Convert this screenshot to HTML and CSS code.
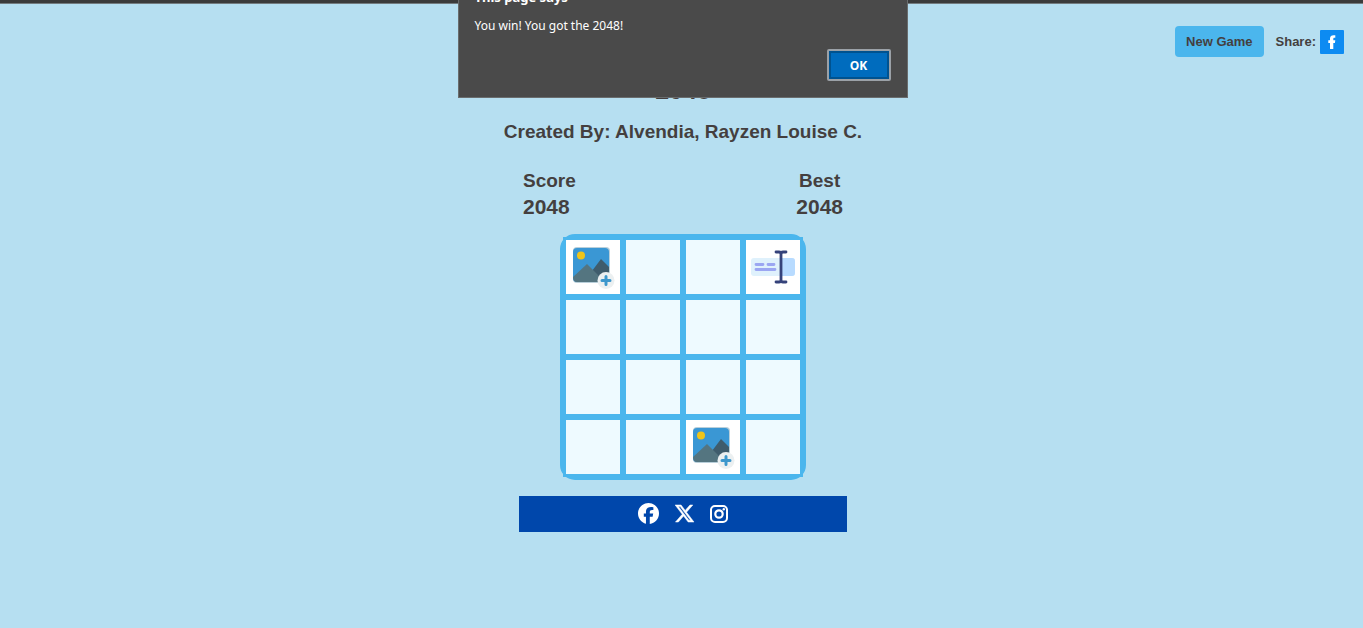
FILE: index.html
```html
<!DOCTYPE html>
<html lang="en">
<head>
<meta charset="utf-8">
<title>2048</title>
<link rel="stylesheet" href="styles.css">
</head>
<body>
<svg class="defs" aria-hidden="true">
  <symbol id="picture" viewBox="0 0 54 54">
    <rect x="7" y="7" width="37" height="36" rx="4" fill="#b9cfda"/>
    <rect x="7" y="8" width="36" height="34" rx="4" fill="#3a97d4"/>
    <circle cx="15" cy="15.500" r="4" fill="#f0c419"/>
    <path d="M26 31 35 19 43 27V38Q43 42 39 42H30Z" fill="#3f5c6c"/>
    <path d="M7 37 21 24 39 42H11Q7 42 7 37Z" fill="#547580"/>
    <circle cx="40" cy="40.500" r="8.500" fill="#ecf0f1"/>
    <path d="M40 36.500v8M36 40.500h8" stroke="#3d97cc" stroke-width="3" stroke-linecap="round"/>
  </symbol>
</svg>
<header class="toolbar">
  <button class="new-game" type="button">New Game</button>
  <span class="share">Share:
    <a class="share-link" href="#" aria-label="Share on Facebook">
      <svg viewBox="0 0 24 24" width="24" height="24"><path d="M10 19V13H8.300V10.200H10V8.600C10 6.400 11.400 5.200 13.600 5.200H15.300V7.800H14.400C13.600 7.800 13.300 8.200 13.300 9V10.200H15.300L14.900 13H13.300V19Z" fill="#fff"/></svg>
    </a>
  </span>
</header>
<main class="game">
  <h1 class="title">2048</h1>
  <h2 class="author">Created By: Alvendia, Rayzen Louise C.</h2>
  <section class="scores">
    <div><h3 class="score-label">Score</h3><div class="score-value">2048</div></div>
    <div class="best"><h3 class="score-label">Best</h3><div class="score-value">2048</div></div>
  </section>
  <div class="board">
    <div class="cell filled"><svg viewBox="0 0 54 54"><use href="#picture"/></svg></div>
    <div class="cell"></div>
    <div class="cell"></div>
    <div class="cell filled"><svg viewBox="0 0 54 54">
      <rect x="5" y="18" width="44" height="18" rx="3" fill="#dff1fc"/>
      <path d="M35 18H46Q49 18 49 21V33Q49 36 46 36H35Z" fill="#b8dbff"/>
      <path d="M10 24.500h7M22 24.500h6M10 29.500h19" stroke="#9ba6f2" stroke-width="2.800" stroke-linecap="round"/>
      <path d="M30 12h3q2 0 2 2q0-2 2-2h3M35 14v26M30 42h3q2 0 2-2q0 2 2 2h3" fill="none" stroke="#35427a" stroke-width="2.800" stroke-linecap="round"/>
    </svg></div>
    <div class="cell"></div><div class="cell"></div><div class="cell"></div><div class="cell"></div>
    <div class="cell"></div><div class="cell"></div><div class="cell"></div><div class="cell"></div>
    <div class="cell"></div>
    <div class="cell"></div>
    <div class="cell filled"><svg viewBox="0 0 54 54"><use href="#picture"/></svg></div>
    <div class="cell"></div>
  </div>
  <footer class="social">
    <a href="#" aria-label="Facebook"><svg width="21" height="21" viewBox="0 0 512 512"><path fill="#fff" d="M512 256C512 114.600 397.400 0 256 0S0 114.600 0 256c0 120 82.700 220.800 194.200 248.500V334.200h-52.800V256h52.800v-33.700c0-87.100 39.400-127.500 125-127.500 16.200 0 44.200 3.200 55.700 6.400V172c-6-.6-16.500-1-29.600-1-42 0-58.200 15.900-58.200 57.200V256h83.600l-14.400 78.200h-69.300v175.900C413.800 494.800 512 386.900 512 256Z"/></svg></a>
    <a href="#" aria-label="X"><svg width="21" height="21" viewBox="0 0 512 512"><path fill="#fff" stroke="#fff" stroke-width="12" d="M389.200 48h70.600L305.600 224.200 487 464H345L233.700 318.600 106.500 464H35.800L200.700 275.500 26.800 48H172.400L272.900 180.900 389.200 48ZM364.400 421.800h39.100L151.100 88h-42L364.400 421.800Z"/></svg></a>
    <a href="#" aria-label="Instagram"><svg width="18" height="20" viewBox="1 0 18 20"><rect x="2" y="2" width="16" height="16" rx="4" fill="none" stroke="#fff" stroke-width="2"/><circle cx="10" cy="10" r="3.700" fill="none" stroke="#fff" stroke-width="2.200"/><circle cx="14.800" cy="5.300" r="1.200" fill="#fff"/></svg></a>
  </footer>
</main>
<div class="dialog" role="alertdialog" aria-labelledby="dialog-title" aria-describedby="dialog-text">
  <div class="dialog-title" id="dialog-title">This page says</div>
  <p class="dialog-text" id="dialog-text">You win! You got the 2048!</p>
  <button class="ok" type="button">OK</button>
</div>
</body>
</html>
```
FILE: styles.css
```css
* { box-sizing: border-box; }
body {
  margin: 0;
  min-height: 100vh;
  background: #b6dff1;
  border-top: 3px solid #3b3b3b;
  color: #443f3f;
  font-family: "Liberation Sans", Arial, sans-serif;
  font-weight: bold;
}
h1, h2, h3, p { margin: 0; }
svg { display: block; }
.defs { position: absolute; width: 0; height: 0; }
.toolbar {
  display: flex;
  justify-content: flex-end;
  align-items: center;
  gap: 12px;
  padding: 22px 19px 0;
  border-top: 1px solid #737b7f;
  font-size: 13px;
}
.new-game {
  height: 31px;
  padding: 0 11px;
  border: 0;
  border-radius: 4px;
  background: #4bb6ed;
  color: inherit;
  font: inherit;
}
.share { display: flex; align-items: center; gap: 4px; }
.share-link { background: #0d8bf2; border-radius: 1px; }
.game {
  display: flex;
  flex-direction: column;
  align-items: center;
  padding: 15px 0 0 3px;
}
.title { font-size: 25px; line-height: 36px; }
.author { margin-top: 12px; font-size: 19px; line-height: 24px; }
.scores {
  display: flex;
  justify-content: space-between;
  width: 328px;
  padding: 0 4px;
  margin-top: 24px;
}
.best { text-align: center; }
.score-label { font-size: 19px; line-height: 26px; }
.score-value { font-size: 21px; line-height: 26px; }
.board {
  display: grid;
  grid-template-columns: repeat(4, 60px);
  margin-top: 14px;
  border: 3px solid #4bb6ed;
  border-radius: 15px;
  background: #4bb6ed;
}
.cell { height: 60px; border: 3px solid #4bb6ed; background: #eefaff; }
.filled { background: #fff; }
.social {
  display: flex;
  justify-content: center;
  align-items: center;
  gap: 15px;
  width: 328px;
  height: 36px;
  padding-bottom: 1px;
  margin-top: 16px;
  background: #0047ab;
}
.dialog {
  position: absolute;
  top: -14px;
  left: calc(50% + 1px);
  transform: translateX(-50%);
  display: flex;
  flex-direction: column;
  width: 450px;
  padding: 0 16px 16px;
  border: 1px solid #6a6d6e;
  background: #4a4a4a;
  color: #fff;
  font-family: "Noto Sans", "Open Sans", sans-serif;
  font-size: 12px;
  font-weight: normal;
}
.dialog-title { font-size: 13px; font-weight: bold; line-height: 20px; }
.dialog-text { margin-top: 9px; line-height: 20px; }
.ok {
  align-self: flex-end;
  width: 64px;
  height: 32px;
  margin-top: 13px;
  border: 2px solid #9ba1a7;
  border-radius: 2px;
  background: #006cbe;
  box-shadow: inset 0 0 0 2px #00528f;
  color: #fff;
  font: bold 12px "Open Sans", "Noto Sans", sans-serif;
}
```
